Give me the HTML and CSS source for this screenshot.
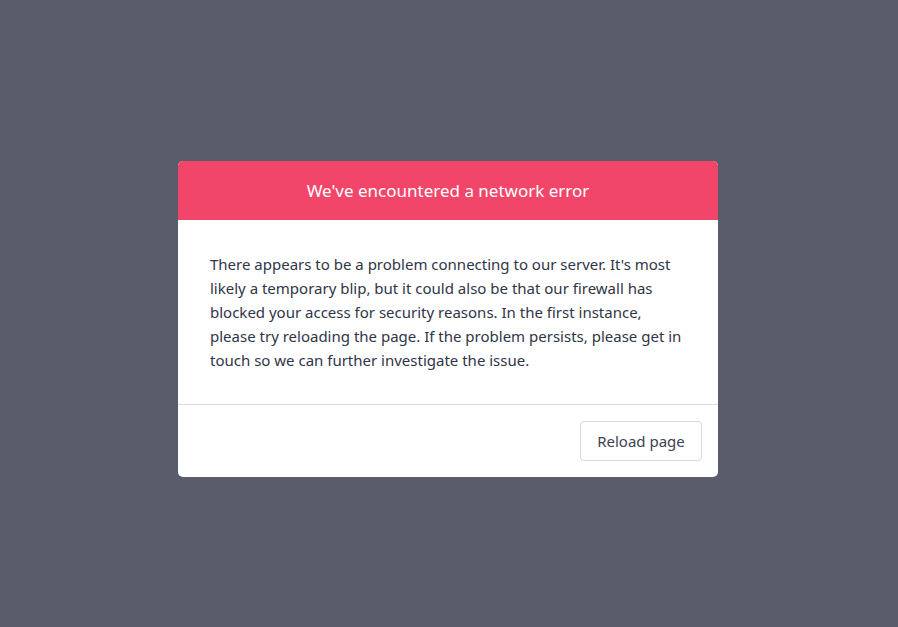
FILE: index.html
```html
<!DOCTYPE html>
<html lang="en">
<head>
  <meta charset="UTF-8" />
  <meta name="viewport" content="width=device-width, initial-scale=1" />
  <title>Network error</title>
  <link rel="stylesheet" href="styles.css">
</head>
<body>
  <main class="overlay">
    <section class="modal">
      <header class="modal-header">
        <h1>We've encountered a network error</h1>
      </header>
      <div class="modal-body">
        <p>There appears to be a problem connecting to our server. It's most likely a temporary blip, but it could also be that our firewall has blocked your access for security reasons. In the first instance, please try reloading the page. If the problem persists, please get in touch so we can further investigate the issue.</p>
      </div>
      <footer class="modal-footer">
        <button id="reload">Reload page</button>
      </footer>
    </section>
  </main>
  <script>
    document.getElementById('reload').addEventListener('click', () => location.reload());
  </script>
</body>
</html>
```

FILE: styles.css
```css
* {
  margin: 0;
  padding: 0;
  box-sizing: border-box;
}

body {
  font-family: "Noto Sans", "Open Sans", sans-serif;
  background: #585d69;
  min-height: 100vh;
  color: #2f3547;
}

.overlay {
  min-height: 100vh;
  display: flex;
  align-items: flex-start;
  justify-content: center;
  padding: 161px 2px 0 0;
}

.modal {
  width: 540px;
  background: #fff;
  border-radius: 5px;
  overflow: hidden;
}

.modal-header {
  background: #f1466a;
  height: 59px;
  display: flex;
  align-items: center;
  justify-content: center;
}

.modal-header h1 {
  color: #fff;
  font-size: 17px;
  font-weight: normal;
}

.modal-body {
  padding: 32px 32px 32px;
  border-bottom: 1px solid #dcdcdc;
}

.modal-body p {
  font-size: 15px;
  line-height: 24px;
}

.modal-footer {
  display: flex;
  justify-content: flex-end;
  padding: 16px;
}

button {
  font-family: inherit;
  font-size: 15px;
  color: #3d4250;
  background: #fff;
  border: 1px solid #dadada;
  border-radius: 4px;
  width: 122px;
  height: 40px;
  cursor: pointer;
}

button:hover {
  background: #f5f5f5;
}
```
